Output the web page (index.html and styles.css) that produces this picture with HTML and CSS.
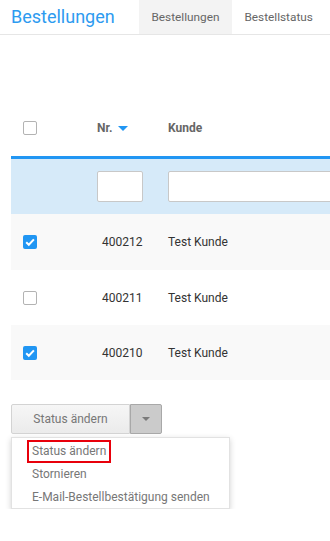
FILE: index.html
```html
<!DOCTYPE html>
<html lang="de">
<head>
<meta charset="utf-8">
<link rel="stylesheet" href="styles.css">
</head>
<body>
<header class="topbar">
  <h1 class="title">Bestellungen</h1>
  <nav class="tabs">
    <span class="tab active">Bestellungen</span>
    <span class="tab">Bestellstatus</span>
  </nav>
</header>
<main class="content">
  <div class="table">
    <div class="row head">
      <div class="cell c1"><span class="cb"></span></div>
      <div class="cell c2">Nr. <span class="sort"></span></div>
      <div class="cell c3">Kunde</div>
    </div>
    <div class="row filter">
      <div class="cell c1"></div>
      <div class="cell c2"><span class="inp small"></span></div>
      <div class="cell c3"><span class="inp wide"></span></div>
    </div>
    <div class="row alt first">
      <div class="cell c1"><span class="cb on"><svg viewBox="0 0 14 14" width="14" height="14"><path d="M3.2 7.3 L5.8 9.8 L10.9 4.4" fill="none" stroke="#fff" stroke-width="2"/></svg></span></div>
      <div class="cell c2 num">400212</div>
      <div class="cell c3">Test Kunde</div>
    </div>
    <div class="row">
      <div class="cell c1"><span class="cb"></span></div>
      <div class="cell c2 num">400211</div>
      <div class="cell c3">Test Kunde</div>
    </div>
    <div class="row alt">
      <div class="cell c1"><span class="cb on"><svg viewBox="0 0 14 14" width="14" height="14"><path d="M3.2 7.3 L5.8 9.8 L10.9 4.4" fill="none" stroke="#fff" stroke-width="2"/></svg></span></div>
      <div class="cell c2 num">400210</div>
      <div class="cell c3">Test Kunde</div>
    </div>
  </div>
  <div class="actions">
    <div class="btngroup">
      <span class="btn main">Status ändern</span>
      <span class="btn caret"><span class="tri"></span></span>
    </div>
    <ul class="menu">
      <li class="item"><span class="focus">Status ändern</span></li>
      <li class="item">Stornieren</li>
      <li class="item">E-Mail-Bestellbestätigung senden</li>
    </ul>
  </div>
</main>
</body>
</html>
```
FILE: styles.css
```css
html, body {
  margin: 0;
  padding: 0;
  overflow: hidden;
  background: #fff;
  font-family: Roboto, "Liberation Sans", sans-serif;
}
.topbar {
  display: flex;
  align-items: stretch;
  height: 34px;
  border-bottom: 1px solid #e6e6e6;
  padding-left: 11px;
}
.title {
  margin: 0;
  font-size: 18px;
  font-weight: 400;
  color: #2d9bf0;
  line-height: 34px;
  width: 128px;
}
.tabs {
  display: flex;
}
.tab {
  padding: 0 12.5px;
  font-size: 11.8px;
  color: #666;
  line-height: 34px;
}
.tab.active {
  background: #f3f3f3;
}
.content {
  padding: 0 11px;
}
.table {
  width: 600px;
  margin-top: 65px;
}
.row {
  display: grid;
  grid-template-columns: 86px 71px 1fr;
  height: 55px;
  align-items: center;
  font-size: 12px;
  color: #333;
}
.row.first {
  height: 56px;
}
.row.head {
  height: 56px;
  font-weight: 700;
  color: #666;
  border-bottom: 3px solid #2196f3;
}
.row.filter {
  background: #d6eaf9;
}
.row.alt {
  background: #f9f9f9;
}
.c1 {
  padding-left: 12px;
  display: flex;
  align-items: center;
}
.num {
  padding-left: 5px;
}
.cb {
  display: block;
  width: 12px;
  height: 12px;
  border: 1px solid #b3b3b3;
  border-radius: 2px;
  background: #fff;
}
.cb.on {
  width: 14px;
  height: 14px;
  border: 0;
  background: #2196f3;
}
.cb svg {
  display: block;
}
.sort {
  display: inline-block;
  width: 0;
  height: 0;
  border-left: 5px solid transparent;
  border-right: 5px solid transparent;
  border-top: 5px solid #2196f3;
  margin-left: 3px;
  vertical-align: middle;
}
.inp {
  display: block;
  height: 29px;
  border: 1px solid #c8c8c8;
  border-radius: 2px;
  background: #fff;
}
.inp.small {
  width: 44px;
}
.inp.wide {
  width: 400px;
}
.actions {
  margin-top: 24px;
}
.btngroup {
  display: flex;
  height: 30px;
}
.btn {
  box-sizing: border-box;
  display: flex;
  align-items: center;
  justify-content: center;
  font-size: 12px;
  color: #777;
}
.btn.main {
  width: 119px;
  border: 1px solid #d3d3d3;
  border-radius: 2px 0 0 2px;
  background: linear-gradient(#f6f6f6, #ebebeb);
}
.btn.caret {
  width: 32px;
  border: 1px solid #a8a8a8;
  border-radius: 0 2px 2px 0;
  background: #cbcbcb;
}
.tri {
  width: 0;
  height: 0;
  border-left: 4px solid transparent;
  border-right: 4px solid transparent;
  border-top: 4px solid #7a7a7a;
}
.menu {
  list-style: none;
  margin: 3px 0 0;
  padding: 2px 0 0;
  width: 219px;
  box-sizing: border-box;
  background: #fff;
  border: 1px solid #e2e2e2;
  box-shadow: 0 2px 6px rgba(0,0,0,0.18);
}
.item {
  display: flex;
  align-items: center;
  height: 22.7px;
  font-size: 12px;
  color: #777;
  padding-left: 20px;
}
.focus {
  display: block;
  box-sizing: border-box;
  height: 23px;
  line-height: 19px;
  border: 2px solid #e8000b;
  padding: 0 3px;
  margin-left: -5px;
}
```
